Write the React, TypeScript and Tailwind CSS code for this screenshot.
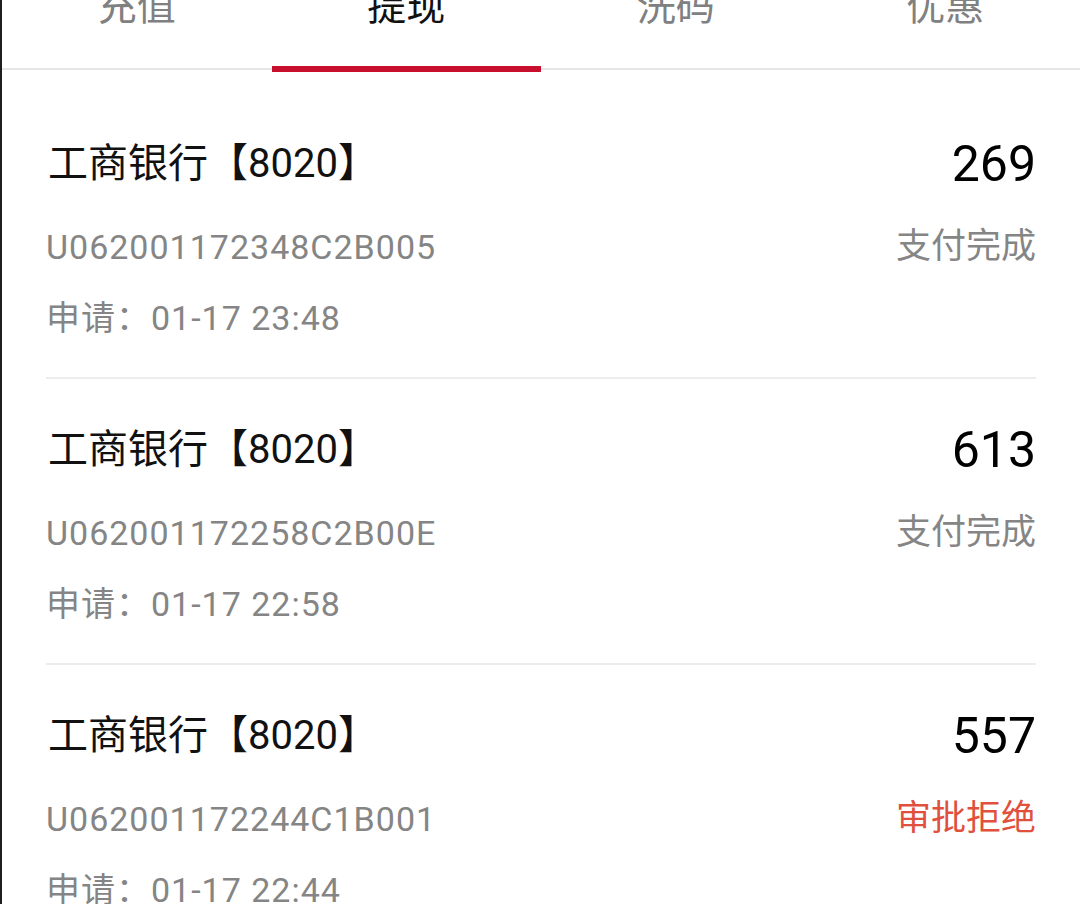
const tabs = ["充值", "提现", "洗码", "优惠"];

interface Record {
    bank: string;
    amount: string;
    orderNo: string;
    status: string;
    rejected?: boolean;
    time: string;
}

const records: Record[] = [
    { bank: "工商银行【8020】", amount: "269", orderNo: "U062001172348C2B005", status: "支付完成", time: "01-17 23:48" },
    { bank: "工商银行【8020】", amount: "613", orderNo: "U062001172258C2B00E", status: "支付完成", time: "01-17 22:58" },
    { bank: "工商银行【8020】", amount: "557", orderNo: "U062001172244C1B001", status: "审批拒绝", rejected: true, time: "01-17 22:44" },
];

export default function App() {
    const active = 1;

    return (
        <div className="min-h-[904px] w-full overflow-hidden border-l-2 border-[#1f1f1f] bg-white font-['Roboto','Noto_Sans_CJK_SC',sans-serif]">

            {/* Tabs */}
            <div className="flex h-[70px] border-b-2 border-[#e6e6e6]">
                {tabs.map((tab, i) => (
                    <div
                        key={tab}
                        className={`relative flex flex-1 items-center justify-center pb-[54px] text-[39px] leading-[44px] ${i === active ? "text-[#111]" : "text-[#808080]"}`}
                    >
                        {tab}
                        {i === active && (
                            <span className="absolute bottom-[-4px] left-0 right-0 h-[6px] bg-[#c8102e]" />
                        )}
                    </div>
                ))}
            </div>

            {/* List */}
            <div className="pt-[23px]">
                {records.map((r) => (
                    <div key={r.orderNo} className="mr-[44px] ml-[44px] border-b-2 border-[#ececec] pt-[43px] pb-[35px]">
                        <div className="flex h-[56px] items-center justify-between">
                            <span className="pl-[2px] text-[40px] text-[#111]">{r.bank}</span>
                            <span className="text-[50px] text-black">{r.amount}</span>
                        </div>
                        <div className="mt-[31px] flex h-[48px] items-center justify-between">
                            <span className="text-[34px] tracking-[1px] text-[#858585]">{r.orderNo}</span>
                            <span className={`text-[35px] ${r.rejected ? "text-[#e0503c]" : "text-[#858585]"}`}>
                                {r.status}
                            </span>
                        </div>
                        <div className="mt-[23px] flex h-[48px] items-center">
                            <span className="text-[34px] tracking-[1px] text-[#858585]">申请：{r.time}</span>
                        </div>
                    </div>
                ))}
            </div>

        </div>
    );
}
